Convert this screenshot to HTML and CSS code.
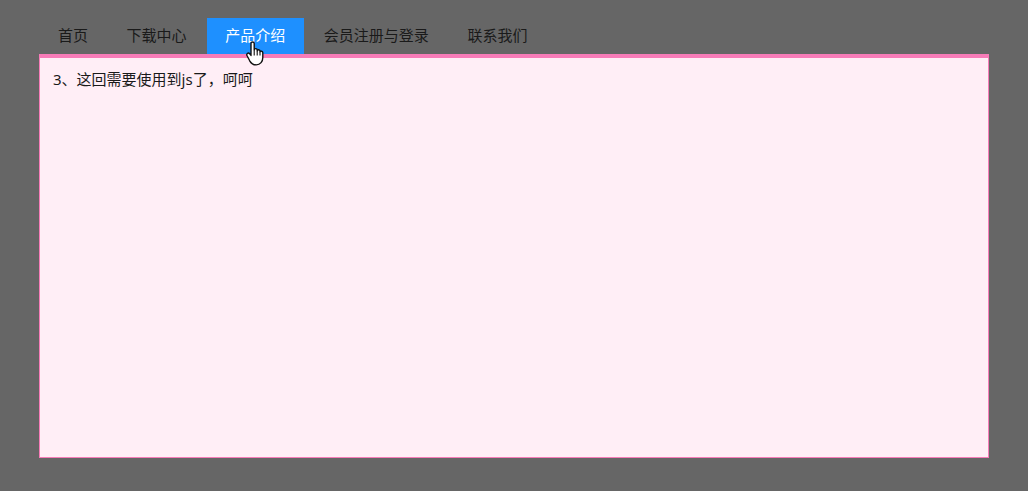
FILE: index.html
```html
<!DOCTYPE html>
<html lang="zh-CN">
<head>
    <meta charset="UTF-8">
    <title>产品介绍</title>
    <link rel="stylesheet" href="styles.css">
</head>
<body>
    <div class="tabs">
        <ul class="tab-nav">
            <li>首页</li>
            <li>下载中心</li>
            <li class="active">产品介绍</li>
            <li>会员注册与登录</li>
            <li>联系我们</li>
        </ul>
        <div class="tab-panel">3、这回需要使用到js了，呵呵</div>
        <svg class="cursor" width="18" height="25" viewBox="0 0 18 25">
            <path d="M5 2.6C5 .5 8.2.5 8.2 2.6v6.2c.3-1.6 3-1.5 3 .3v.6c.4-1.4 2.8-1.2 2.8.5v.6c.5-1.1 2.8-.8 2.8 1v4.7c0 3.9-2.4 7.4-6.6 7.4-3.4 0-5-1.5-6.5-4.1L1.2 15c-1.3-2.1 1-3.9 2.5-2.2L5 14.4z" fill="#fff" stroke="#111" stroke-width="1.4" stroke-linejoin="round"/>
            <path d="M8.2 9v5.5M11.2 10v4.5M14 11v3.5" fill="none" stroke="#111" stroke-width="1.1"/>
        </svg>
    </div>
</body>
</html>
```

FILE: styles.css
```css
* {
    margin: 0;
    padding: 0;
    box-sizing: border-box;
}

body {
    font-family: "Noto Sans", "Noto Sans CJK SC", sans-serif;
    font-size: 15px;
    color: #1a1a1a;
    background-color: #666;
}

.tabs {
    position: relative;
    width: 950px;
    margin-left: 39px;
    padding-top: 18px;
}

.tab-nav {
    display: flex;
    gap: 2.6px;
    height: 36px;
    padding-left: 1px;
    list-style: none;
}

.tab-nav li {
    padding: 0 18px;
    line-height: 35px;
}

.tab-nav .active {
    padding-right: 19px;
    margin-right: -1px;
    color: #fff;
    background-color: #1e90ff;
}

.tab-panel {
    height: 404px;
    padding: 9px 13px;
    line-height: 24px;
    background-color: #ffeef6;
    border: 1px solid #f77cb8;
    border-top-width: 4px;
}

.cursor {
    position: absolute;
    left: 207px;
    top: 41px;
}
```
